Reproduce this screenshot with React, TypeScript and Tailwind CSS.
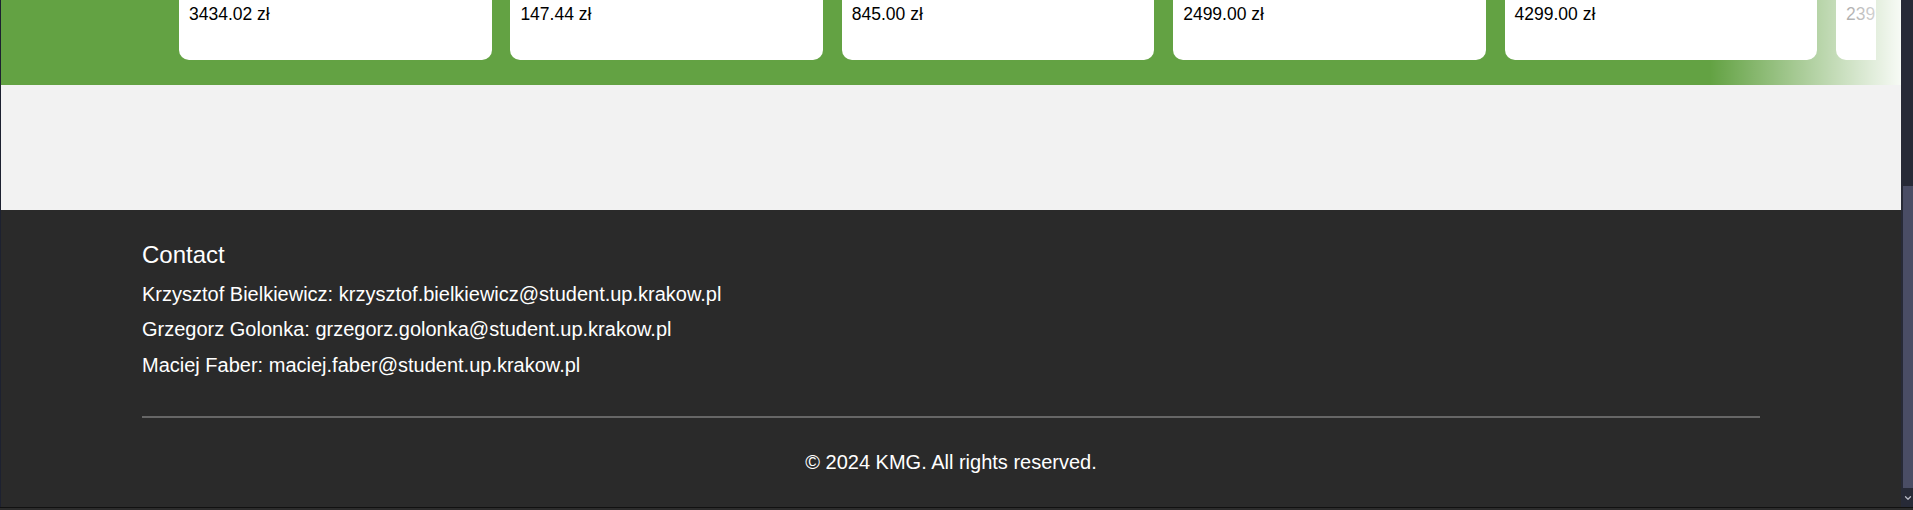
import { ChevronDown } from "lucide-react";

const products = [
  { id: 1, price: "3434.02 zł" },
  { id: 2, price: "147.44 zł" },
  { id: 3, price: "845.00 zł" },
  { id: 4, price: "2499.00 zł" },
  { id: 5, price: "4299.00 zł" },
  { id: 6, price: "2399.00 zł" },
];

const contacts = [
  { name: "Krzysztof Bielkiewicz", email: "krzysztof.bielkiewicz@student.up.krakow.pl" },
  { name: "Grzegorz Golonka", email: "grzegorz.golonka@student.up.krakow.pl" },
  { name: "Maciej Faber", email: "maciej.faber@student.up.krakow.pl" },
];

function ProductStrip() {
  return (
    <section className="relative h-[85px] shrink-0 bg-[#63a243] pr-[25px]">
      <div className="flex h-full min-w-0 gap-[18.9px] overflow-hidden pl-[178px]">
        {products.map((p) => (
          <div
            key={p.id}
            className="h-[60px] w-[312.5px] shrink-0 rounded-b-[10px] bg-white pl-[10px] pt-[3px]"
          >
            <span className="whitespace-nowrap text-[17.5px] leading-[20px] text-black">{p.price}</span>
          </div>
        ))}
      </div>
      {/* fade on the right edge of the carousel */}
      <div className="pointer-events-none absolute right-0 top-0 h-full w-[191px] bg-gradient-to-r from-[#63a243]/0 to-white/95" />
    </section>
  );
}

function Footer() {
  return (
    <footer className="flex-1 bg-[#2a2a2a] px-[141px] pt-[31px] text-white">
      <h3 className="text-[24px] leading-[28px]">Contact</h3>
      <div className="mt-[13.6px] flex flex-col gap-[12.5px]">
        {contacts.map((c) => (
          <p key={c.email} className="text-[20px] leading-[23px]">
            {c.name}: {c.email}
          </p>
        ))}
      </div>
      <hr className="mt-[39px] border-0 border-t-2 border-[#666666]" />
      <p className="mt-[33px] text-center text-[20px] leading-[23px]">
        © 2024 KMG. All rights reserved.
      </p>
    </footer>
  );
}

function Scrollbar() {
  return (
    <div className="flex w-[12px] shrink-0 flex-col bg-[#272a37]">
      <div className="h-[186px]" />
      <div className="ml-[2px] h-[302px] bg-[#4a4d65]" />
      <div className="flex flex-1 items-center justify-center pl-[2px] text-[#b8bac4]">
        <ChevronDown size={10} strokeWidth={3} />
      </div>
    </div>
  );
}

export default function App() {
  return (
    <div
      className="flex h-[510px] w-full flex-col overflow-hidden bg-[#2a2a2a]"
      style={{ fontFamily: '"Liberation Sans", Arial, sans-serif' }}
    >
      <div className="flex h-[507px] min-w-0">
        <div className="flex min-w-0 flex-1 flex-col border-l border-[#1d2130]">
          <ProductStrip />
          <div className="h-[125px] shrink-0 bg-[#f2f2f2]" />
          <Footer />
        </div>
        <Scrollbar />
      </div>
      <div className="h-[3px] border-t border-[#111111] bg-[#2c2c2c]" />
    </div>
  );
}
